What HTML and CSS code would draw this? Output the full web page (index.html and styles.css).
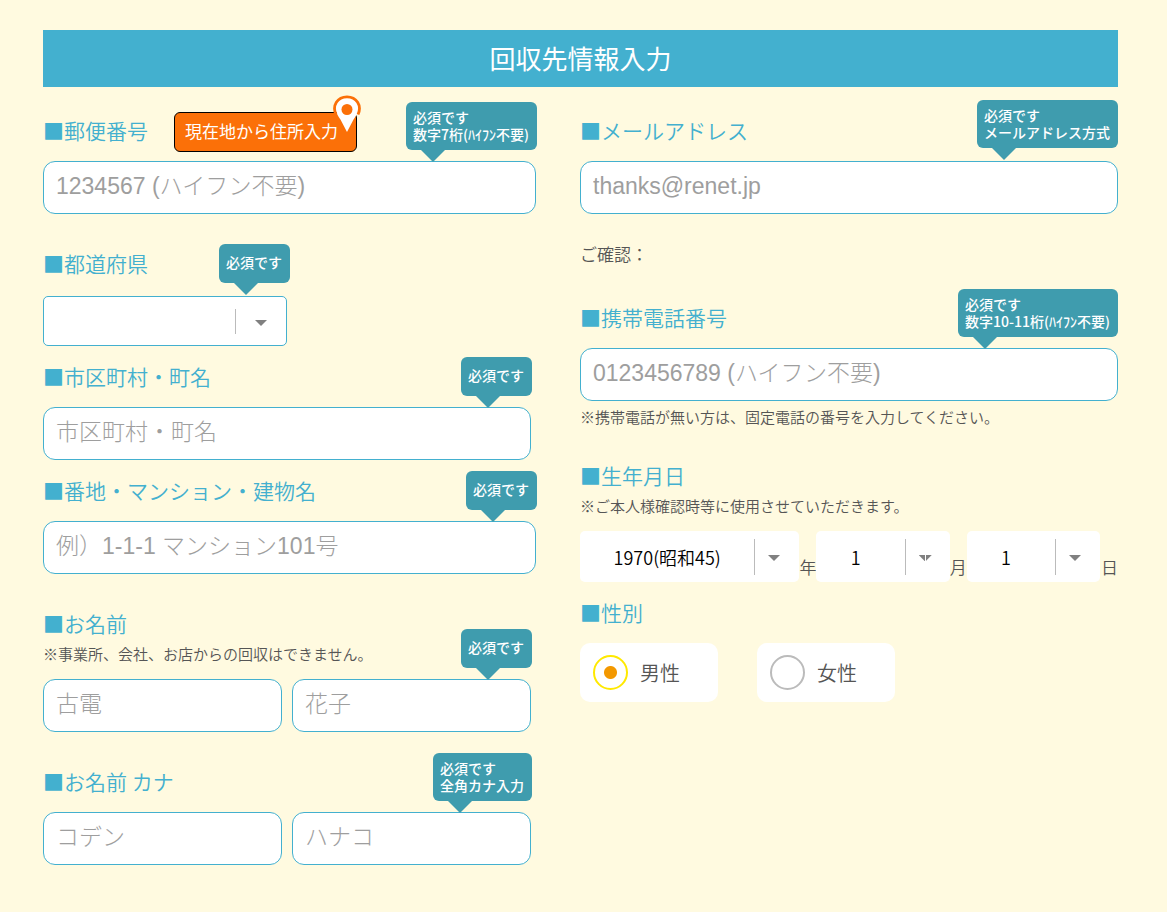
FILE: index.html
```html
<!DOCTYPE html>
<html lang="ja">
<head>
<meta charset="utf-8">
<meta name="viewport" content="width=device-width, initial-scale=1">
<title>回収先情報入力</title>
<link rel="stylesheet" href="styles.css">
</head>
<body>
<main class="page">
  <h1 class="page-title">回収先情報入力</h1>
  <form class="form">
    <div class="column">
      <div class="field field-first">
        <div class="label-row">
          <label class="label" for="zip">■郵便番号</label>
          <button class="locate" type="button">現在地から住所入力
            <svg class="pin" viewBox="0 0 28 38" aria-hidden="true">
              <path d="M14 2.300C7.700 2.300 2.800 7.500 2.800 13.400c0 4.400 2.200 7.100 4.800 11.300L14 37l6.400-12.300c2.600-4.200 4.800-6.900 4.800-11.300C25.200 7.500 20.300 2.300 14 2.300Z" fill="#fff"/>
              <path d="M3 19.500C-1.200 10.500 4.500 1.900 14 1.900S29.200 10.500 25 19.500" fill="none" stroke="#fb7008" stroke-width="2.800"/>
              <circle cx="14" cy="14.500" r="5.500" fill="#fb7008"/>
            </svg>
          </button>
        </div>
        <div class="control">
          <input class="text" id="zip" type="text" placeholder="1234567 (ハイフン不要)">
          <span class="tip">必須です<br>数字7桁(ﾊｲﾌﾝ不要)</span>
        </div>
      </div>

      <div class="field field-spaced">
        <label class="label" for="pref">■都道府県</label>
        <div class="control select select-pref">
          <select id="pref"><option></option><option>東京都</option></select>
          <span class="tip tip-raised">必須です</span>
        </div>
      </div>

      <div class="field">
        <label class="label" for="city">■市区町村・町名</label>
        <div class="control control-short">
          <input class="text" id="city" type="text" placeholder="市区町村・町名">
          <span class="tip">必須です</span>
        </div>
      </div>

      <div class="field">
        <label class="label" for="street">■番地・マンション・建物名</label>
        <div class="control">
          <input class="text" id="street" type="text" placeholder="例）1-1-1 マンション101号">
          <span class="tip">必須です</span>
        </div>
      </div>

      <div class="field field-spaced">
        <label class="label" for="family">■お名前</label>
        <p class="note note-label">※事業所、会社、お店からの回収はできません。</p>
        <div class="control control-short pair">
          <input class="text" id="family" type="text" placeholder="古電">
          <input class="text" type="text" aria-label="名" placeholder="花子">
          <span class="tip">必須です</span>
        </div>
      </div>

      <div class="field field-spaced">
        <label class="label" for="family-kana">■お名前 カナ</label>
        <div class="control control-short pair">
          <input class="text" id="family-kana" type="text" placeholder="コデン">
          <input class="text" type="text" aria-label="名 カナ" placeholder="ハナコ">
          <span class="tip">必須です<br>全角カナ入力</span>
        </div>
      </div>
    </div>

    <div class="column column-right">
      <div class="field field-first">
        <label class="label" for="mail">■メールアドレス</label>
        <div class="control">
          <input class="text" id="mail" type="email" placeholder="thanks@renet.jp">
          <span class="tip tip-raised">必須です<br>メールアドレス方式</span>
        </div>
        <p class="confirm">ご確認：</p>
      </div>

      <div class="field field-phone">
        <label class="label" for="phone">■携帯電話番号</label>
        <div class="control">
          <input class="text" id="phone" type="tel" placeholder="0123456789 (ハイフン不要)">
          <span class="tip">必須です<br>数字10-11桁(ﾊｲﾌﾝ不要)</span>
        </div>
        <p class="note note-after">※携帯電話が無い方は、固定電話の番号を入力してください。</p>
      </div>

      <div class="field field-birth">
        <label class="label" for="year">■生年月日</label>
        <p class="note note-label">※ご本人様確認時等に使用させていただきます。</p>
        <div class="date">
          <div class="select select-year"><select id="year"><option>1970(昭和45)</option></select></div>
          <span class="unit">年</span>
          <div class="select select-part select-month"><select aria-label="月"><option>1</option></select></div>
          <span class="unit">月</span>
          <div class="select select-part"><select aria-label="日"><option>1</option></select></div>
          <span class="unit unit-last">日</span>
        </div>
      </div>

      <div class="field" role="radiogroup" aria-labelledby="gender">
        <span class="label" id="gender">■性別</span>
        <div class="choices">
          <label class="choice"><input type="radio" name="gender" checked>男性</label>
          <label class="choice"><input type="radio" name="gender">女性</label>
        </div>
      </div>
    </div>
  </form>
</main>
</body>
</html>
```
FILE: styles.css
```css
* { box-sizing: border-box; }

body {
  margin: 0;
  background: #fffae0;
  color: #555;
  font-family: "Noto Sans CJK JP", sans-serif;
  font-size: 17px;
  font-weight: 350;
}

p, h1 { margin: 0; }

.page { padding: 30px 49px 47px 43px; }

.page-title {
  padding: 9px 10px 11px;
  background: #43b0cf;
  color: #fff;
  font-size: 26px;
  font-weight: 400;
  line-height: 37px;
  text-align: center;
}

.form {
  display: grid;
  grid-template-columns: 493fr 538fr;
  gap: 44px;
}

.field { padding-top: 15px; }
.field-first { padding-top: 28px; }
.field-spaced { padding-top: 34px; }
.field-phone { padding-top: 36px; }
.field-birth { padding-top: 31px; }

.label-row {
  display: flex;
  align-items: center;
  gap: 26px;
  height: 32px;
}

.label {
  display: block;
  padding-bottom: 2px;
  color: #43b0cf;
  font-size: 21px;
  line-height: 30px;
}

.control {
  position: relative;
  margin-top: 14px;
}

.control-short { width: 99%; }

.pair {
  display: grid;
  grid-template-columns: 1fr 1fr;
  gap: 10px;
}

.text {
  display: block;
  width: 100%;
  height: 53px;
  padding: 0 12px 2px;
  border: 1px solid #43b0cf;
  border-radius: 12px;
  background: #fff;
  color: #333;
  font-family: "Liberation Sans", "Noto Sans CJK JP", sans-serif;
  font-size: 23px;
  font-weight: 300;
}

.text::placeholder {
  color: #9e9e9e;
  opacity: 1;
}

.locate {
  position: relative;
  height: 40px;
  margin-top: 2px;
  padding: 0 18px 3px 10px;
  border: 1px solid #000;
  border-radius: 6px;
  background: #fb7008;
  color: #fff;
  font: inherit;
  font-weight: 400;
  white-space: nowrap;
}

.pin {
  position: absolute;
  top: -18px;
  right: -5px;
  width: 28px;
  height: 38px;
}

.tip {
  position: absolute;
  right: -1px;
  bottom: calc(100% + 11px);
  padding: 7px 8px 7px 7px;
  border-radius: 6px;
  background: #3f9cae;
  color: #fff;
  font-size: 14px;
  font-weight: 500;
  line-height: 17px;
  white-space: nowrap;
}

.tip:not(:has(br)) { padding: 10px 8px 12px 7px; }
.tip-raised { bottom: calc(100% + 13px); }
.column-right .tip { right: 0; }
.select-pref .tip { right: -3px; }

.tip::after {
  content: "";
  position: absolute;
  top: 100%;
  left: 15px;
  border: 12px solid transparent;
  border-top-color: #3f9cae;
  border-bottom-width: 0;
}

.select { position: relative; }

.select select {
  display: block;
  width: 100%;
  height: 51px;
  padding: 0 45px 0 0;
  border: 0;
  border-radius: 5px;
  appearance: none;
  background: #fff;
  color: #000;
  font-family: inherit;
  font-size: 18px;
  font-weight: 350;
  text-align: center;
  text-align-last: center;
}

.select::before {
  content: "";
  position: absolute;
  top: 8px;
  right: 44px;
  bottom: 7px;
  width: 1px;
  background: #bbb;
  z-index: 1;
}

.select::after {
  content: "";
  position: absolute;
  top: 24px;
  right: 19px;
  border: 6px solid transparent;
  border-top-color: #808080;
  border-bottom-width: 0;
  pointer-events: none;
}

.select-pref {
  width: 244px;
  margin-top: 16px;
}

.select-pref select {
  height: 50px;
  border: 1px solid #43b0cf;
}

.select-pref::before {
  top: 13px;
  right: 51px;
  bottom: 12px;
}

.select-pref::after { right: 20px; }

.note {
  font-size: 15px;
  line-height: 24px;
}

.note-label { margin: 2px 0 13px; }
.note-label + .control { margin-top: 0; }
.note-after { margin-top: 4px; }

.confirm {
  margin-top: 28px;
  line-height: 24px;
}

.date {
  display: flex;
  align-items: flex-end;
}

.select-year { flex: 219 1 0; }
.select-part { flex: 133 1 0; }
.select-part select { padding-right: 55px; }

.select-month::after {
  width: 13px;
  height: 6px;
  right: 18px;
  border: 0;
  background:
    linear-gradient(#fff, #fff) center / 1px 100% no-repeat,
    #808080;
  clip-path: polygon(0 0, 100% 0, 55% 100%, 45% 100%);
}

.unit {
  padding-bottom: 3px;
  line-height: 24px;
}

.unit-last { padding-left: 1px; }

.choices {
  display: flex;
  gap: 39px;
  margin-top: 14px;
}

.choice {
  display: flex;
  align-items: center;
  gap: 12px;
  width: 138px;
  height: 59px;
  padding-left: 13px;
  border-radius: 10px;
  background: #fff;
  font-size: 20px;
}

.choice input {
  width: 35px;
  height: 35px;
  margin: 0;
  border: 2px solid #bbb;
  border-radius: 50%;
  appearance: none;
  background: #fff;
}

.choice input:checked {
  border-color: #ffe900;
  background: radial-gradient(circle, #f39800 6px, #fff 7px);
}
```
